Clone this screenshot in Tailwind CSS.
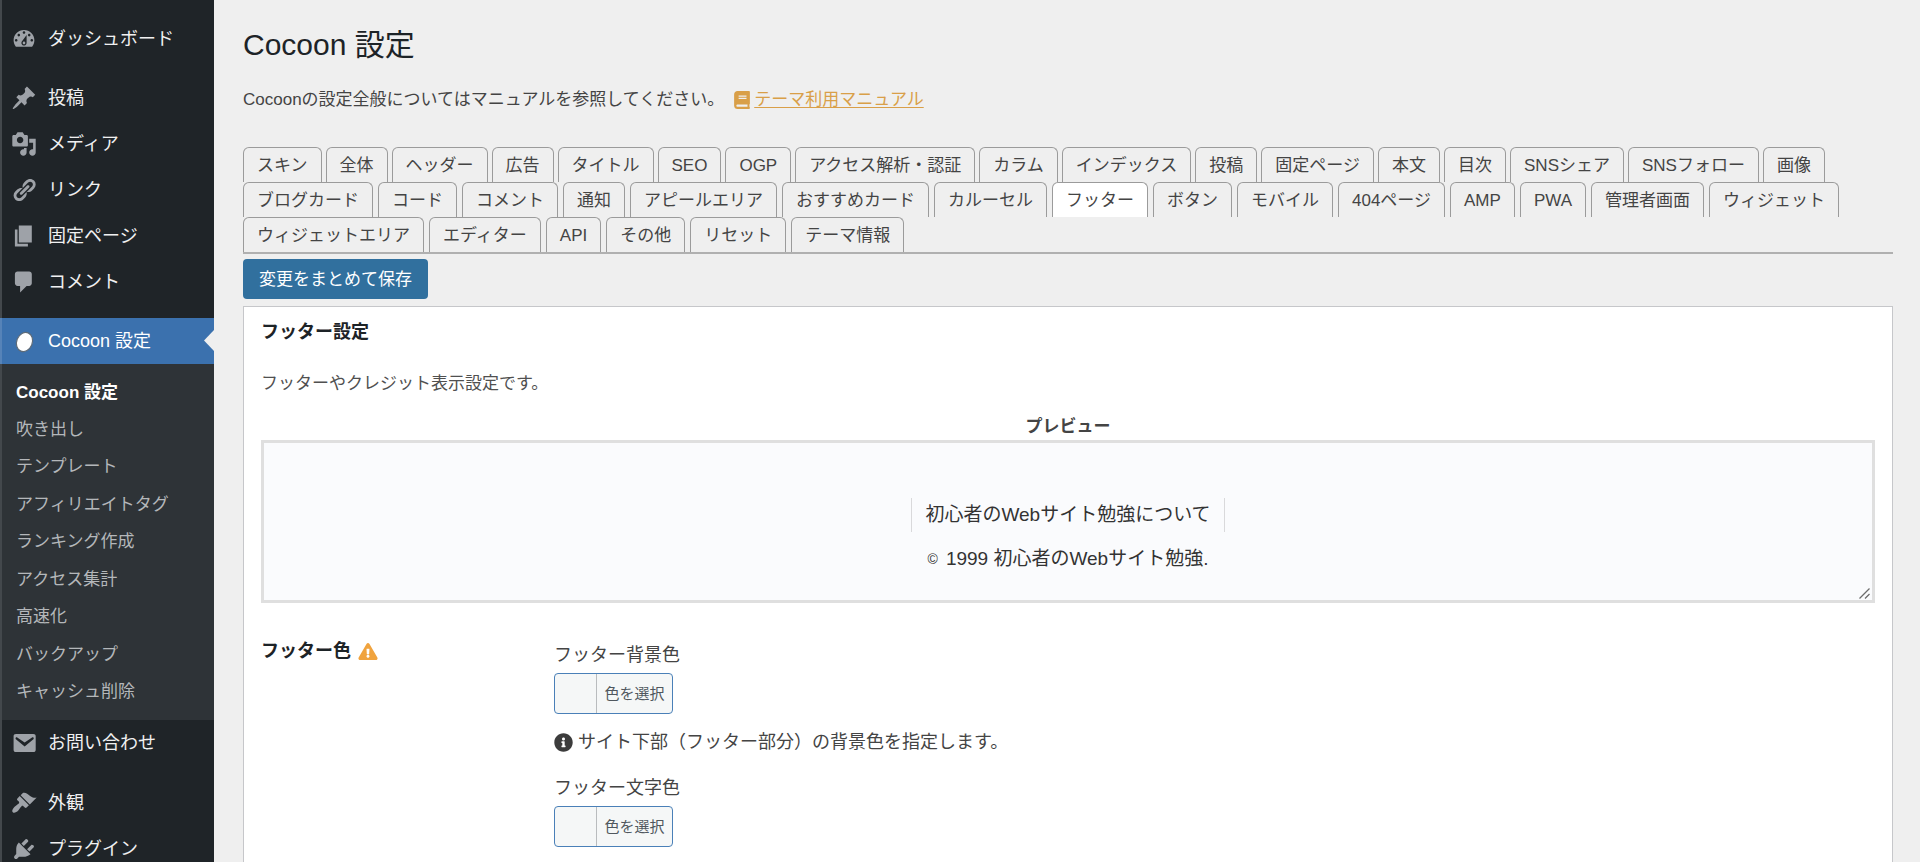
<!DOCTYPE html>
<html lang="ja">
<head>
<meta charset="utf-8">
<meta name="viewport" content="width=device-width, initial-scale=1">
<title>Cocoon 設定</title>
<script src="https://cdn.jsdelivr.net/npm/@tailwindcss/browser@4"></script>
</head>
<body class="bg-[#efefef] font-['Liberation_Sans','Noto_Sans_CJK_JP',sans-serif] text-[#444]">
<div class="flex h-screen overflow-hidden">

  <!-- Admin menu -->
  <nav aria-label="メインメニュー" class="w-[214px] shrink-0 border-l-2 border-[#43484c] bg-[#1f2428] pt-4 text-lg text-[#f0f0f1]">
    <a href="#" class="mb-[13px] flex h-[46px] items-center gap-[11px] pl-[9px]">
      <svg class="size-[26px] fill-[#9ea2a8]" viewBox="0 0 20 20"><path d="M3.76 16h12.48c1.1-1.37 1.76-3.11 1.76-5 0-4.42-3.58-8-8-8s-8 3.58-8 8c0 1.89.66 3.63 1.76 5zM10 4c.55 0 1 .45 1 1s-.45 1-1 1-1-.45-1-1 .45-1 1-1zM6 6c.55 0 1 .45 1 1s-.45 1-1 1-1-.45-1-1 .45-1 1-1zm8 0c.55 0 1 .45 1 1s-.45 1-1 1-1-.45-1-1 .45-1 1-1zm-5.37 5.55L12 7v6c0 1.1-.9 2-2 2s-2-.9-2-2c0-.57.24-1.08.63-1.45zM4 10c.55 0 1 .45 1 1s-.45 1-1 1-1-.45-1-1 .45-1 1-1zm12 0c.55 0 1 .45 1 1s-.45 1-1 1-1-.45-1-1 .45-1 1-1zm-5 3c0-.55-.45-1-1-1s-1 .45-1 1 .45 1 1 1 1-.45 1-1z"/></svg>
      ダッシュボード</a>
    <a href="#" class="flex h-[46px] items-center gap-[11px] pl-[9px]">
      <svg class="size-[26px] fill-[#9ea2a8]" viewBox="0 0 20 20"><path d="M10.44 3.02l1.82-1.82 6.36 6.35-1.83 1.82c-1.05-.68-2.48-.57-3.41.36l-.75.75c-.92.93-1.04 2.35-.35 3.41l-1.83 1.82-2.41-2.41-2.8 2.79c-.42.42-3.38 2.71-3.8 2.29s1.86-3.39 2.28-3.81l2.79-2.79L4.1 9.36l1.83-1.82c1.05.69 2.48.57 3.4-.36l.75-.75c.93-.92 1.05-2.35.36-3.41z"/></svg>
      投稿</a>
    <a href="#" class="flex h-[46px] items-center gap-[11px] pl-[9px]">
      <svg class="size-[26px] fill-[#9ea2a8]" viewBox="0 0 20 20"><path d="M13 11V4c0-.55-.45-1-1-1h-1.67L9 1H5L3.67 3H2c-.55 0-1 .45-1 1v7c0 .55.45 1 1 1h10c.55 0 1-.45 1-1zM7 4.5c1.38 0 2.5 1.12 2.5 2.5S8.38 9.5 7 9.5 4.5 8.38 4.5 7 5.62 4.5 7 4.5zM14 6h5v10.5c0 1.38-1.12 2.5-2.5 2.5S14 17.88 14 16.5s1.12-2.5 2.5-2.5c.17 0 .34.02.5.05V9h-3V6zm-4 8.05V13h2v3.5c0 1.38-1.12 2.5-2.5 2.5S7 17.88 7 16.5 8.12 14 9.5 14c.17 0 .34.02.5.05z"/></svg>
      メディア</a>
    <a href="#" class="flex h-[46px] items-center gap-[11px] pl-[9px]">
      <svg class="size-[26px] fill-[#9ea2a8]" viewBox="0 0 20 20"><path d="M17.74 2.76c1.68 1.69 1.68 4.41 0 6.1l-1.53 1.52c-1.12 1.12-2.7 1.47-4.14 1.09l2.62-2.61.76-.77.76-.76c.84-.84.84-2.2 0-3.04-.84-.85-2.2-.85-3.04 0l-.77.76-3.38 3.38c-.37-1.44-.02-3.02 1.1-4.14l1.52-1.53c1.69-1.68 4.42-1.68 6.1 0zM8.59 13.43l5.34-5.34c.42-.42.42-1.1 0-1.52-.44-.43-1.13-.39-1.53 0l-5.33 5.34c-.42.42-.42 1.1 0 1.52.44.43 1.13.39 1.52 0zm-.76 2.29l4.14-4.15c.38 1.44.03 3.02-1.09 4.14l-1.52 1.53c-1.69 1.68-4.41 1.68-6.1 0-1.68-1.68-1.68-4.42 0-6.1l1.53-1.52c1.12-1.12 2.7-1.47 4.14-1.1l-4.14 4.15c-.85.84-.85 2.2 0 3.05.84.84 2.2.84 3.04 0z"/></svg>
      リンク</a>
    <a href="#" class="flex h-[46px] items-center gap-[11px] pl-[9px]">
      <svg class="size-[26px] fill-[#9ea2a8]" viewBox="0 0 20 20"><path d="M6 15V2h10v13H6zm-1 1h8v2H3V5h2v11z"/></svg>
      固定ページ</a>
    <a href="#" class="flex h-[46px] items-center gap-[11px] pl-[9px]">
      <svg class="size-[26px] fill-[#9ea2a8]" viewBox="0 0 20 20"><path d="M5 2h9c1.1 0 2 .9 2 2v7c0 1.1-.9 2-2 2h-2l-5 5v-5H5c-1.1 0-2-.9-2-2V4c0-1.1.9-2 2-2z"/></svg>
      コメント</a>
    <a href="#" aria-current="page" class="relative -ml-0.5 mt-[13px] flex h-[46px] items-center gap-[11px] border-l-2 border-[#5683b8] bg-[#3b71ae] pl-[9px] text-white">
      <svg class="size-[26px]" viewBox="0 0 26 26"><ellipse cx="13.500" cy="14" rx="7.800" ry="9.800" transform="rotate(22 13.500 14)" fill="#fff" stroke="#5e6b78" stroke-width="1.200"/></svg>
      Cocoon 設定
      <svg class="absolute right-0 top-3 h-[21px] w-[10px] fill-[#efefef]" viewBox="0 0 10 21"><path d="M10 0v21L0 10.500z"/></svg>
    </a>
    <div class="flex min-h-[356px] flex-col bg-[#2e3337] pb-[9px] pl-3.5 pt-2.5 text-[17px] text-[#b4b7ba]">
      <a href="#" class="flex flex-1 items-center font-bold text-white">Cocoon 設定</a>
      <a href="#" class="flex flex-1 items-center">吹き出し</a>
      <a href="#" class="flex flex-1 items-center">テンプレート</a>
      <a href="#" class="flex flex-1 items-center">アフィリエイトタグ</a>
      <a href="#" class="flex flex-1 items-center">ランキング作成</a>
      <a href="#" class="flex flex-1 items-center">アクセス集計</a>
      <a href="#" class="flex flex-1 items-center">高速化</a>
      <a href="#" class="flex flex-1 items-center">バックアップ</a>
      <a href="#" class="flex flex-1 items-center">キャッシュ削除</a>
    </div>
    <a href="#" class="mb-3.5 flex h-[46px] items-center gap-[11px] pl-[9px]">
      <svg class="size-[26px] fill-[#9ea2a8]" viewBox="0 0 20 20"><path d="M3.870 3h13.250C18.370 3 19 3.590 19 4.790v10.420c0 1.190-.630 1.790-1.880 1.790H3.870c-1.250 0-1.880-.600-1.880-1.790V4.790c0-1.200.630-1.790 1.880-1.790zm6.620 9.600l6.740-5.530c.240-.200.430-.660.130-1.070-.290-.410-.820-.420-1.170-.170l-5.700 3.860L4.800 5.830c-.350-.250-.880-.240-1.170.170-.300.410-.110.870.130 1.070z"/></svg>
      お問い合わせ</a>
    <a href="#" class="flex h-[46px] items-center gap-[11px] pl-[9px]">
      <svg class="size-[26px] fill-[#9ea2a8]" viewBox="0 0 20 20"><path d="M14.48 11.06L7.41 3.99l1.5-1.5c.5-.56 2.3-.47 3.51.32 1.21.8 1.43 1.28 2.91 2.1 1.18.64 2.45 1.26 4.45.85zm-.71.71L6.7 4.7 4.93 6.47c-.39.39-.39 1.02 0 1.41l1.06 1.06c.39.39.39 1.03 0 1.42-.6.6-1.43 1.11-2.21 1.69-.35.26-.7.53-1.01.84C1.43 14.23.4 16.08 1.4 17.07c.99 1 2.84-.03 4.18-1.36.31-.31.58-.66.85-1.02.57-.78 1.08-1.61 1.69-2.21.39-.39 1.02-.39 1.41 0l1.06 1.06c.39.39 1.02.39 1.41 0z"/></svg>
      外観</a>
    <a href="#" class="flex h-[46px] items-center gap-[11px] pl-[9px]">
      <svg class="size-[26px] fill-[#9ea2a8]" viewBox="0 0 20 20"><path d="M13.11 4.36L9.87 7.6 8 5.73l3.24-3.24c.35-.34 1.05-.2 1.56.32.52.51.66 1.21.31 1.55zm-8 1.77l.91-1.12 9.01 9.01-1.19.84c-.71.71-2.63 1.16-3.82 1.16H6.14L4.9 17.26c-.59.59-1.54.59-2.12 0-.59-.58-.59-1.53 0-2.12l1.24-1.24v-3.88c0-1.13.4-3.19 1.09-3.89zm7.26 3.97l3.24-3.24c.34-.35 1.04-.21 1.55.31.52.51.66 1.21.31 1.55l-3.24 3.25z"/></svg>
      プラグイン</a>
  </nav>

  <main class="min-w-0 flex-1 pl-[29px] pr-[27px] pt-[27px]">
    <h1 class="text-[30px] leading-9 text-[#1d2327]">Cocoon 設定</h1>
    <p class="mt-[25px] flex items-center text-[17px] leading-6">Cocoonの設定全般についてはマニュアルを参照してください。<a href="#" class="ml-2.5 flex items-center text-[#d99f48] underline underline-offset-2"><svg class="mr-1 h-[18px] w-4 fill-current" viewBox="0 0 448 512"><path d="M448 360V24c0-13.300-10.700-24-24-24H96C43 0 0 43 0 96v320c0 53 43 96 96 96h328c13.300 0 24-10.700 24-24v-16c0-7.500-3.500-14.300-8.900-18.700-4.200-15.400-4.200-59.300 0-74.700 5.400-4.300 8.900-11.100 8.900-18.600zM128 134c0-3.300 2.700-6 6-6h212c3.300 0 6 2.700 6 6v20c0 3.300-2.700 6-6 6H134c-3.300 0-6-2.700-6-6v-20zm0 64c0-3.300 2.700-6 6-6h212c3.300 0 6 2.700 6 6v20c0 3.300-2.700 6-6 6H134c-3.300 0-6-2.700-6-6v-20zm253.400 250H96c-17.700 0-32-14.300-32-32 0-17.600 14.400-32 32-32h285.400c-1.900 17.100-1.900 46.900 0 64z"/></svg>テーマ利用マニュアル</a></p>

    <!-- Setting tabs -->
    <div role="tablist" class="mt-[35px] border-b-2 border-[#b0b0b0] text-[17px]">
      <div role="presentation" class="flex flex-wrap gap-x-1">
        <button role="tab" class="h-[35px] rounded-t-md border border-b-0 border-[#9b9b9b] px-[13px] pt-0.5">スキン</button>
        <button role="tab" class="h-[35px] rounded-t-md border border-b-0 border-[#9b9b9b] px-[13px] pt-0.5">全体</button>
        <button role="tab" class="h-[35px] rounded-t-md border border-b-0 border-[#9b9b9b] px-[13px] pt-0.5">ヘッダー</button>
        <button role="tab" class="h-[35px] rounded-t-md border border-b-0 border-[#9b9b9b] px-[13px] pt-0.5">広告</button>
        <button role="tab" class="h-[35px] rounded-t-md border border-b-0 border-[#9b9b9b] px-[13px] pt-0.5">タイトル</button>
        <button role="tab" class="h-[35px] rounded-t-md border border-b-0 border-[#9b9b9b] px-[13px] pt-0.5">SEO</button>
        <button role="tab" class="h-[35px] rounded-t-md border border-b-0 border-[#9b9b9b] px-[13px] pt-0.5">OGP</button>
        <button role="tab" class="h-[35px] rounded-t-md border border-b-0 border-[#9b9b9b] px-[13px] pt-0.5">アクセス解析・認証</button>
        <button role="tab" class="h-[35px] rounded-t-md border border-b-0 border-[#9b9b9b] px-[13px] pt-0.5">カラム</button>
        <button role="tab" class="h-[35px] rounded-t-md border border-b-0 border-[#9b9b9b] px-[13px] pt-0.5">インデックス</button>
        <button role="tab" class="h-[35px] rounded-t-md border border-b-0 border-[#9b9b9b] px-[13px] pt-0.5">投稿</button>
        <button role="tab" class="h-[35px] rounded-t-md border border-b-0 border-[#9b9b9b] px-[13px] pt-0.5">固定ページ</button>
        <button role="tab" class="h-[35px] rounded-t-md border border-b-0 border-[#9b9b9b] px-[13px] pt-0.5">本文</button>
        <button role="tab" class="h-[35px] rounded-t-md border border-b-0 border-[#9b9b9b] px-[13px] pt-0.5">目次</button>
        <button role="tab" class="h-[35px] rounded-t-md border border-b-0 border-[#9b9b9b] px-[13px] pt-0.5">SNSシェア</button>
        <button role="tab" class="h-[35px] rounded-t-md border border-b-0 border-[#9b9b9b] px-[13px] pt-0.5">SNSフォロー</button>
        <button role="tab" class="h-[35px] rounded-t-md border border-b-0 border-[#9b9b9b] px-[13px] pt-0.5">画像</button>
      </div>
      <div role="presentation" class="flex flex-wrap gap-x-[5px]">
        <button role="tab" class="h-[35px] rounded-t-md border border-b-0 border-[#9b9b9b] px-[13px] pt-0.5">ブログカード</button>
        <button role="tab" class="h-[35px] rounded-t-md border border-b-0 border-[#9b9b9b] px-[13px] pt-0.5">コード</button>
        <button role="tab" class="h-[35px] rounded-t-md border border-b-0 border-[#9b9b9b] px-[13px] pt-0.5">コメント</button>
        <button role="tab" class="h-[35px] rounded-t-md border border-b-0 border-[#9b9b9b] px-[13px] pt-0.5">通知</button>
        <button role="tab" class="h-[35px] rounded-t-md border border-b-0 border-[#9b9b9b] px-[13px] pt-0.5">アピールエリア</button>
        <button role="tab" class="h-[35px] rounded-t-md border border-b-0 border-[#9b9b9b] px-[13px] pt-0.5">おすすめカード</button>
        <button role="tab" class="h-[35px] rounded-t-md border border-b-0 border-[#9b9b9b] px-[13px] pt-0.5">カルーセル</button>
        <button role="tab" aria-selected="true" class="h-[35px] rounded-t-md border border-b-0 border-[#9b9b9b] bg-white px-[13px] pt-0.5">フッター</button>
        <button role="tab" class="h-[35px] rounded-t-md border border-b-0 border-[#9b9b9b] px-[13px] pt-0.5">ボタン</button>
        <button role="tab" class="h-[35px] rounded-t-md border border-b-0 border-[#9b9b9b] px-[13px] pt-0.5">モバイル</button>
        <button role="tab" class="h-[35px] rounded-t-md border border-b-0 border-[#9b9b9b] px-[13px] pt-0.5">404ページ</button>
        <button role="tab" class="h-[35px] rounded-t-md border border-b-0 border-[#9b9b9b] px-[13px] pt-0.5">AMP</button>
        <button role="tab" class="h-[35px] rounded-t-md border border-b-0 border-[#9b9b9b] px-[13px] pt-0.5">PWA</button>
        <button role="tab" class="h-[35px] rounded-t-md border border-b-0 border-[#9b9b9b] px-[13px] pt-0.5">管理者画面</button>
        <button role="tab" class="h-[35px] rounded-t-md border border-b-0 border-[#9b9b9b] px-[13px] pt-0.5">ウィジェット</button>
      </div>
      <div role="presentation" class="flex flex-wrap gap-x-[5px]">
        <button role="tab" class="h-[35px] rounded-t-md border border-b-0 border-[#9b9b9b] px-[13px] pt-0.5">ウィジェットエリア</button>
        <button role="tab" class="h-[35px] rounded-t-md border border-b-0 border-[#9b9b9b] px-[13px] pt-0.5">エディター</button>
        <button role="tab" class="h-[35px] rounded-t-md border border-b-0 border-[#9b9b9b] px-[13px] pt-0.5">API</button>
        <button role="tab" class="h-[35px] rounded-t-md border border-b-0 border-[#9b9b9b] px-[13px] pt-0.5">その他</button>
        <button role="tab" class="h-[35px] rounded-t-md border border-b-0 border-[#9b9b9b] px-[13px] pt-0.5">リセット</button>
        <button role="tab" class="h-[35px] rounded-t-md border border-b-0 border-[#9b9b9b] px-[13px] pt-0.5">テーマ情報</button>
      </div>
    </div>

    <button class="mt-[5px] block h-10 rounded bg-[#31709e] px-4 pt-0.5 text-[17px] text-white">変更をまとめて保存</button>

    <section class="mt-[7px] min-h-[600px] border border-[#c6c7ca] bg-white px-[17px] pt-[13px]">
      <h2 class="text-lg leading-6 font-bold text-[#1d2327]">フッター設定</h2>
      <p class="mt-7 text-[17px] leading-6 text-[#505050]">フッターやクレジット表示設定です。</p>
      <p class="mt-[19px] text-center text-[17px] leading-6 font-bold">プレビュー</p>
      <div class="relative mt-px flex min-h-[163px] flex-col items-center border-[3px] border-[#dfdfdf] bg-[#fafbfd] pt-[55px] text-[19px] text-[#333]">
        <a href="#" class="flex h-[34px] items-center border-x border-[#d9d9db] px-[13px]">初心者のWebサイト勉強について</a>
        <p class="mt-[13px] flex items-center gap-2 leading-7"><span class="text-sm">©</span>1999 初心者のWebサイト勉強.</p>
        <svg class="absolute bottom-px right-0.5 size-[11px] stroke-[#6c6c6c]" viewBox="0 0 11 11"><path d="M0.500 10.500l10-10M6 10.500l4.500-4.500" stroke-width="1.300"/></svg>
      </div>

      <div class="mt-9 flex">
        <h3 class="flex w-[293px] items-center gap-[7px] self-start text-lg leading-6 font-bold text-[#1d2327]">フッター色
          <svg class="h-[17px] w-5 fill-[#f0a33e]" viewBox="0 0 576 512"><path d="M569.517 440.013C587.975 472.007 564.806 512 527.940 512H48.054c-36.937 0-59.999-40.055-41.577-71.987L246.423 23.985c18.467-32.009 64.720-31.951 83.154 0l239.940 416.028zM288 354c-25.405 0-46 20.595-46 46s20.595 46 46 46 46-20.595 46-46-20.595-46-46-46zm-43.673-165.346l7.418 136c.347 6.364 5.609 11.346 11.982 11.346h48.546c6.373 0 11.635-4.982 11.982-11.346l7.418-136c.375-6.874-5.098-12.654-11.982-12.654h-63.383c-6.884 0-12.356 5.780-11.981 12.654z"/></svg>
        </h3>
        <div class="min-w-0 flex-1 pt-1 text-lg leading-6">
          <p id="bg-label">フッター背景色</p>
          <button aria-describedby="bg-label" class="mt-1.5 flex h-[41px] w-[119px] overflow-hidden rounded border border-[#4a80b8] bg-[#f5f7f7] text-[15px] text-[#50575e]"><span class="h-full w-[42px] border-r border-[#b9bcbe]"></span><span class="flex h-full flex-1 items-center justify-center">色を選択</span></button>
          <p class="mt-4 flex items-center gap-[5px]"><svg class="size-[19px] fill-[#3c3c3c]" viewBox="0 0 512 512"><path d="M256 8C119.043 8 8 119.083 8 256c0 136.997 111.043 248 248 248s248-111.003 248-248C504 119.083 392.957 8 256 8zm0 110c23.196 0 42 18.804 42 42s-18.804 42-42 42-42-18.804-42-42 18.804-42 42-42zm56 254c0 6.627-5.373 12-12 12h-88c-6.627 0-12-5.373-12-12v-24c0-6.627 5.373-12 12-12h12v-64h-12c-6.627 0-12-5.373-12-12v-24c0-6.627 5.373-12 12-12h64c6.627 0 12 5.373 12 12v100h12c6.627 0 12 5.373 12 12v24z"/></svg>サイト下部（フッター部分）の背景色を指定します。</p>
          <p id="text-label" class="mt-[22px]">フッター文字色</p>
          <button aria-describedby="text-label" class="mt-1.5 flex h-[41px] w-[119px] overflow-hidden rounded border border-[#4a80b8] bg-[#f5f7f7] text-[15px] text-[#50575e]"><span class="h-full w-[42px] border-r border-[#b9bcbe]"></span><span class="flex h-full flex-1 items-center justify-center">色を選択</span></button>
        </div>
      </div>
    </section>
  </main>
</div>
</body>
</html>
